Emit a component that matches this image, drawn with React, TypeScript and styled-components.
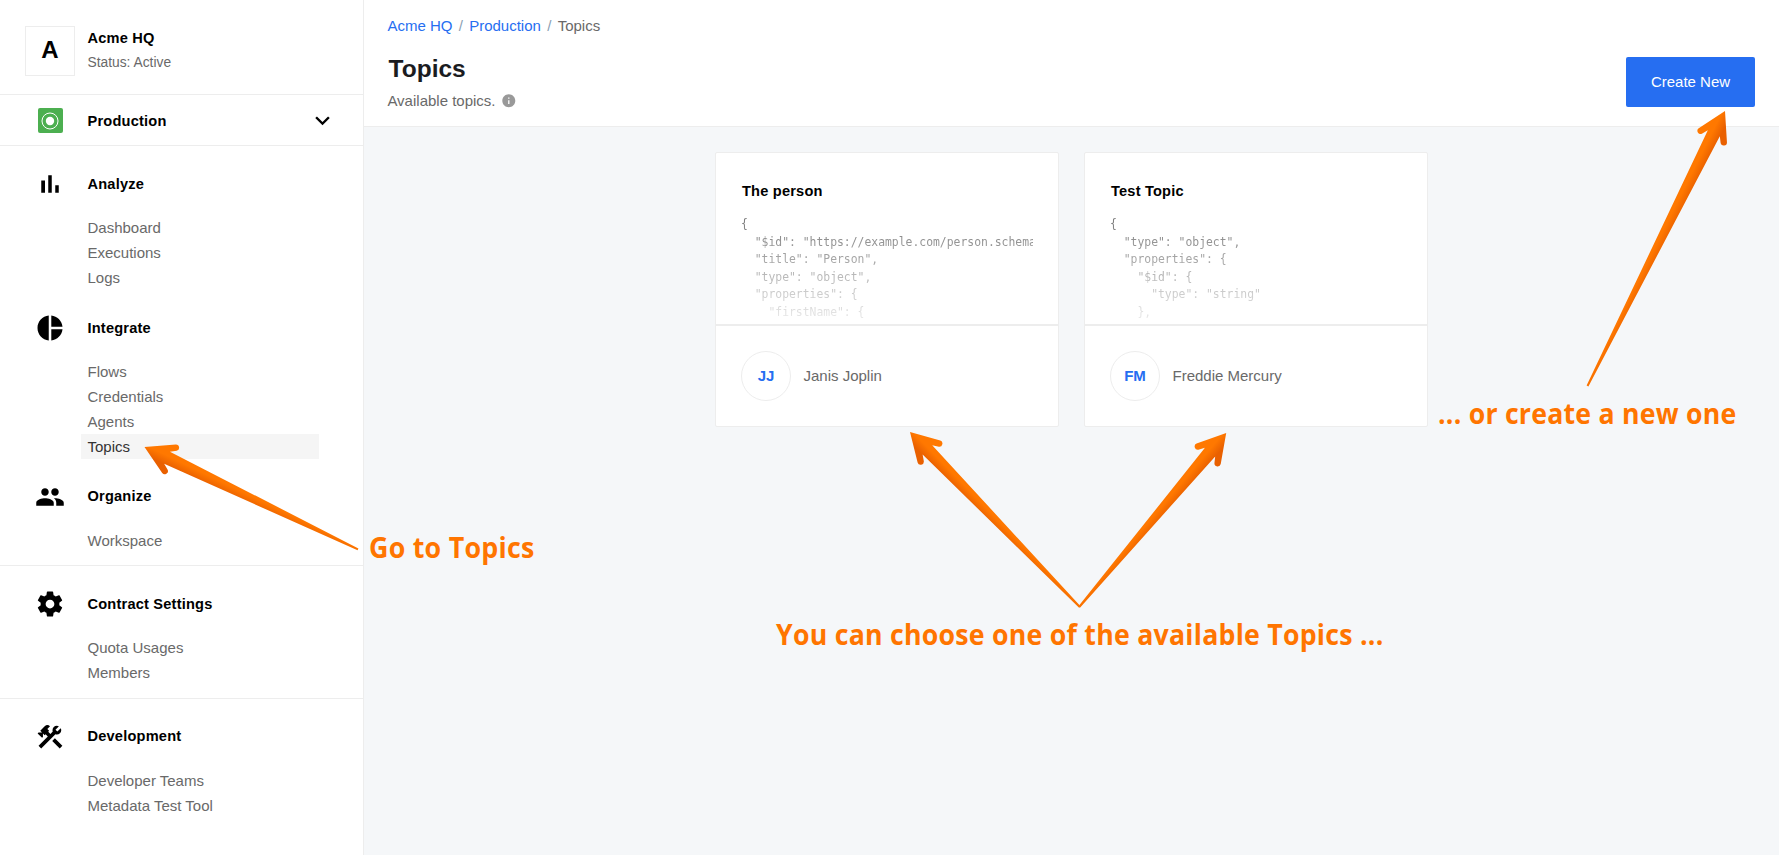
import React from "react";
import styled, { createGlobalStyle } from "styled-components";
import { MdExpandMore, MdInfo } from "react-icons/md";

const line = "#ededed";
const blue = "#266ef1";
const grey = "#696969";

const GlobalStyle = createGlobalStyle`
  * { box-sizing: border-box; }
  body {
    margin: 0;
    font-family: "Liberation Sans", Arial, sans-serif;
    font-size: 15px;
    color: ${grey};
    background: #f5f7f9;
    overflow: hidden;
  }
`;

const Page = styled.div`
  position: relative;
  display: flex;
  width: 100%;
  height: 100vh;
  overflow: hidden;
`;

const Sidebar = styled.aside`
  flex: 0 0 364px;
  background: #fff;
  border-right: 1px solid ${line};
`;

const Account = styled.div`
  display: flex;
  align-items: center;
  gap: 12.5px;
  height: 95px;
  padding: 8px 25px 0;
  border-bottom: 1px solid ${line};
`;

const AccountLogo = styled.div`
  display: flex;
  align-items: center;
  justify-content: center;
  width: 50px;
  height: 50px;
  border: 1px solid ${line};
  color: #000;
  font-size: 24px;
  font-weight: 700;
  padding-bottom: 2px;
`;

const AccountText = styled.div`
  padding-bottom: 2px;
`;

const AccountName = styled.div`
  color: #000;
  font-size: 14.6px;
  font-weight: 700;
  letter-spacing: 0.2px;
  line-height: 25px;
`;

const AccountStatus = styled.div`
  font-size: 13.8px;
  line-height: 24px;
`;

const WorkspaceSwitch = styled.div`
  display: flex;
  align-items: center;
  height: 51px;
  padding: 0 26px 0 38px;
  border-bottom: 1px solid ${line};
  color: #000;
  font-size: 14.6px;
  font-weight: 700;
  letter-spacing: 0.2px;
`;

const WorkspaceName = styled.span`
  flex: 1;
  margin-left: 24.5px;
  padding-top: 1px;
`;

const NavSection = styled.section<{ $last?: boolean; $bottom?: number }>`
  padding: 23px 0 ${(p) => p.$bottom ?? 12}px;
  border-bottom: ${(p) => (p.$last ? "none" : `1px solid ${line}`)};
`;

const NavGroup = styled.div`
  & + & {
    margin-top: 23px;
  }
`;

const NavTitle = styled.div<{ $lineHeight?: number }>`
  display: flex;
  gap: 22.5px;
  height: 30px;
  margin-bottom: 16px;
  padding-left: 35px;
  color: #000;
  font-size: 14.6px;
  font-weight: 700;
  letter-spacing: 0.2px;
  line-height: ${(p) => p.$lineHeight ?? 30}px;
`;

const NavItem = styled.div<{ $active?: boolean }>`
  height: 25px;
  line-height: 25px;
  margin: 0 44px 0 81px;
  padding-left: 6.5px;
  color: ${(p) => (p.$active ? "#333" : grey)};
  background: ${(p) => (p.$active ? "#f5f5f5" : "transparent")};
`;

const Main = styled.main`
  flex: 1;
  min-width: 0;
`;

const Header = styled.header`
  display: flex;
  justify-content: space-between;
  height: 127px;
  padding: 0 24px 0 23.4px;
  background: #fff;
  border-bottom: 1px solid ${line};
`;

const Breadcrumb = styled.nav`
  display: flex;
  gap: 6.3px;
  height: 26px;
  margin-top: 13px;
  line-height: 26px;
`;

const Crumb = styled.span<{ $link?: boolean }>`
  color: ${(p) => (p.$link ? blue : grey)};
`;

const Slash = styled.span`
  color: #8c9fb4;
`;

const Title = styled.h1`
  margin: 15px 0 0 1.2px;
  color: #1b1c1f;
  font-size: 24.5px;
  font-weight: 700;
  line-height: 30px;
`;

const Subtitle = styled.div`
  display: flex;
  align-items: center;
  gap: 5px;
  height: 26px;
  margin-top: 3px;

  svg {
    margin-top: 1px;
    color: #999;
  }
`;

const CreateButton = styled.button`
  width: 129px;
  height: 50px;
  margin-top: 57px;
  padding: 0 0 2px;
  border: 0;
  border-radius: 2px;
  background: ${blue};
  color: #fff;
  font: 15px "Liberation Sans", Arial, sans-serif;
`;

const Cards = styled.div`
  display: flex;
  justify-content: center;
  gap: 25px;
  padding-top: 25px;
`;

const Card = styled.article`
  width: 344px;
  height: 275px;
  border: 1px solid ${line};
  border-radius: 2px;
  background: #fff;
`;

const CardBody = styled.div`
  height: 173px;
  padding: 26px 25px 0;
  border-bottom: 2px solid ${line};
`;

const CardTitle = styled.h2`
  margin: 0 0 10px 1px;
  color: #000;
  font-size: 14.6px;
  font-weight: 700;
  letter-spacing: 0.2px;
  line-height: 25px;
`;

const Code = styled.pre`
  height: 108px;
  margin: 0;
  padding-top: 2px;
  overflow: hidden;
  color: #666;
  font-family: "DejaVu Sans Mono", monospace;
  font-size: 11.4px;
  line-height: 17.5px;
  mask-image: linear-gradient(to bottom, rgba(0, 0, 0, 0.9), rgba(0, 0, 0, 0.12));
`;

const CardFooter = styled.div`
  display: flex;
  align-items: center;
  gap: 12.5px;
  height: 100px;
  padding: 0 25px;
`;

const Avatar = styled.div`
  display: flex;
  align-items: center;
  justify-content: center;
  width: 50px;
  height: 50px;
  padding-bottom: 2px;
  border: 1px solid ${line};
  border-radius: 50%;
  color: ${blue};
  font-weight: 700;
`;

const OwnerName = styled.span`
  padding-bottom: 2px;
`;

const Overlay = styled.svg`
  position: absolute;
  inset: 0;
  width: 1779px;
  height: 855px;
  pointer-events: none;
`;

const Note = styled.text`
  fill: #ff7500;
  font-family: "Open Sans", sans-serif;
  font-size: 28.5px;
  font-weight: 700;
  letter-spacing: 0.25px;
`;

const icons = {
  bars: "M5 9.2h3V19H5zM10.6 5h2.8v14h-2.8zm5.6 8H19v6h-2.8z",
  pie: "M11 2v20c-5.07-.5-9-4.79-9-10s3.93-9.5 9-10zm2.03 0v8.99H22c-.47-4.74-4.24-8.52-8.97-8.99zm0 11.01V22c4.74-.47 8.5-4.25 8.97-8.99h-8.97z",
  people:
    "M16 11c1.66 0 2.99-1.34 2.99-3S17.66 5 16 5c-1.66 0-3 1.34-3 3s1.34 3 3 3zm-8 0c1.66 0 2.99-1.34 2.99-3S9.66 5 8 5C6.34 5 5 6.34 5 8s1.34 3 3 3zm0 2c-2.33 0-7 1.17-7 3.5V19h14v-2.5c0-2.33-4.67-3.5-7-3.5zm8 0c-.29 0-.62.02-.97.05 1.16.84 1.97 1.97 1.97 3.45V19h6v-2.5c0-2.33-4.67-3.5-7-3.5z",
  gear: "M19.43 12.98c.04-.32.07-.64.07-.98s-.03-.66-.07-.98l2.11-1.65c.19-.15.24-.42.12-.64l-2-3.46c-.12-.22-.39-.3-.61-.22l-2.49 1c-.52-.4-1.08-.73-1.69-.98l-.38-2.65C14.46 2.18 14.25 2 14 2h-4c-.25 0-.46.18-.49.42l-.38 2.65c-.61.25-1.17.59-1.69.98l-2.49-1c-.23-.09-.49 0-.61.22l-2 3.46c-.13.22-.07.49.12.64l2.11 1.65c-.04.32-.07.65-.07.98s.03.66.07.98l-2.11 1.65c-.19.15-.24.42-.12.64l2 3.46c.12.22.39.3.61.22l2.49-1c.52.4 1.08.73 1.69.98l.38 2.65c.03.24.24.42.49.42h4c.25 0 .46-.18.49-.42l.38-2.65c.61-.25 1.17-.59 1.69-.98l2.49 1c.23.09.49 0 .61-.22l2-3.46c.12-.22.07-.49-.12-.64l-2.11-1.65zM12 15.5c-1.93 0-3.5-1.57-3.5-3.5s1.57-3.5 3.5-3.5 3.5 1.57 3.5 3.5-1.57 3.5-3.5 3.5z",
  tools:
    "M13.78 15.17l2.12-2.12 6 6-2.12 2.12zM17.5 10c1.93 0 3.5-1.57 3.5-3.5 0-.58-.16-1.12-.41-1.6l-2.7 2.7-1.49-1.49 2.7-2.7c-.48-.25-1.02-.41-1.6-.41C15.57 3 14 4.57 14 6.5c0 .41.08.8.21 1.16l-1.85 1.85-1.78-1.78.71-.71-1.41-1.41L12 3.49a3 3 0 0 0-4.24 0L4.22 7.03l1.41 1.41H2.81l-.71.71 3.54 3.54.71-.71V9.15l1.41 1.41.71-.71 1.78 1.78-7.41 7.41 2.12 2.12L16.34 9.79c.36.13.75.21 1.16.21z",
};

type Group = {
  title: string;
  icon: keyof typeof icons;
  items: string[];
  lineHeight?: number;
};

const sections: { groups: Group[]; bottom?: number }[] = [
  {
    groups: [
      { title: "Analyze", icon: "bars", items: ["Dashboard", "Executions", "Logs"] },
      { title: "Integrate", icon: "pie", items: ["Flows", "Credentials", "Agents", "Topics"] },
      { title: "Organize", icon: "people", items: ["Workspace"], lineHeight: 28 },
    ],
  },
  {
    groups: [{ title: "Contract Settings", icon: "gear", items: ["Quota Usages", "Members"] }],
    bottom: 13,
  },
  {
    groups: [
      {
        title: "Development",
        icon: "tools",
        items: ["Developer Teams", "Metadata Test Tool"],
        lineHeight: 28,
      },
    ],
  },
];

const topics = [
  {
    title: "The person",
    initials: "JJ",
    owner: "Janis Joplin",
    code: `{
  "$id": "https://example.com/person.schema.json",
  "title": "Person",
  "type": "object",
  "properties": {
    "firstName": {`,
  },
  {
    title: "Test Topic",
    initials: "FM",
    owner: "Freddie Mercury",
    code: `{
  "type": "object",
  "properties": {
    "$id": {
      "type": "string"
    },`,
  },
];

function NavIcon({ name }: { name: keyof typeof icons }) {
  return (
    <svg width="30" height="30" viewBox="0 0 24 24" fill="#000">
      <path d={icons[name]} />
    </svg>
  );
}

type ArrowProps = { tip: [number, number]; tail: [number, number]; flip?: boolean };

/* Tapered arrow drawn along the x axis, then turned to run from tip to tail. */
function Arrow({ tip, tail, flip }: ArrowProps) {
  const dx = tail[0] - tip[0];
  const dy = tail[1] - tip[1];
  const length = Math.hypot(dx, dy);
  const angle = (Math.atan2(dy, dx) * 180) / Math.PI;
  return (
    <path
      transform={`translate(${tip[0]} ${tip[1]}) rotate(${angle}) scale(1 ${flip ? -1 : 1})`}
      fill="url(#arrowFill)"
      d={`M0 0L27.2 15.8A3.2 3.2 0 0 0 30.7 10.5L25 6.7L${length} 1V-1L25 -6.7L30.7 -10.5A3.2 3.2 0 0 0 27.2 -15.8Z`}
    />
  );
}

export default function App() {
  return (
    <>
      <GlobalStyle />
      <Page>
        <Sidebar>
          <Account>
            <AccountLogo>A</AccountLogo>
            <AccountText>
              <AccountName>Acme HQ</AccountName>
              <AccountStatus>Status: Active</AccountStatus>
            </AccountText>
          </Account>
          <WorkspaceSwitch>
            <svg width="25" height="25" viewBox="0 0 25 25">
              <rect width="25" height="25" rx="2" fill="#4caf50" />
              <circle cx="12" cy="13" r="8" fill="none" stroke="#fff" strokeWidth="1" />
              <circle cx="12" cy="13" r="4.2" fill="#fff" />
            </svg>
            <WorkspaceName>Production</WorkspaceName>
            <MdExpandMore size={29} />
          </WorkspaceSwitch>
          {sections.map((section, i) => (
            <NavSection key={i} $bottom={section.bottom} $last={i === sections.length - 1}>
              {section.groups.map(({ title, icon, items, lineHeight }) => (
                <NavGroup key={title}>
                  <NavTitle $lineHeight={lineHeight}>
                    <NavIcon name={icon} />
                    {title}
                  </NavTitle>
                  {items.map((item) => (
                    <NavItem key={item} $active={item === "Topics"}>
                      {item}
                    </NavItem>
                  ))}
                </NavGroup>
              ))}
            </NavSection>
          ))}
        </Sidebar>
        <Main>
          <Header>
            <div>
              <Breadcrumb>
                <Crumb $link>Acme HQ</Crumb>
                <Slash>/</Slash>
                <Crumb $link>Production</Crumb>
                <Slash>/</Slash>
                <Crumb>Topics</Crumb>
              </Breadcrumb>
              <Title>Topics</Title>
              <Subtitle>
                Available topics.
                <MdInfo size={15.6} />
              </Subtitle>
            </div>
            <CreateButton>Create New</CreateButton>
          </Header>
          <Cards>
            {topics.map((topic) => (
              <Card key={topic.title}>
                <CardBody>
                  <CardTitle>{topic.title}</CardTitle>
                  <Code>{topic.code}</Code>
                </CardBody>
                <CardFooter>
                  <Avatar>{topic.initials}</Avatar>
                  <OwnerName>{topic.owner}</OwnerName>
                </CardFooter>
              </Card>
            ))}
          </Cards>
        </Main>
        <Overlay viewBox="0 0 1779 855">
          <defs>
            <linearGradient id="arrowFill" gradientUnits="userSpaceOnUse" x1="0" y1="-2" x2="0" y2="7">
              <stop offset="0" stopColor="#ff7800" />
              <stop offset="1" stopColor="#e96000" />
            </linearGradient>
          </defs>
          <Arrow tip={[144.5, 447]} tail={[358, 549.3]} />
          <Arrow tip={[910, 432]} tail={[1079.8, 607]} />
          <Arrow tip={[1226.2, 433]} tail={[1079.2, 607]} flip />
          <Arrow tip={[1725, 111]} tail={[1587.5, 386]} flip />
          <Note x="369" y="557.5" textLength="165.5" lengthAdjust="spacingAndGlyphs">
            Go to Topics
          </Note>
          <Note x="776" y="644.5" textLength="607.5" lengthAdjust="spacingAndGlyphs">
            You can choose one of the available Topics ...
          </Note>
          <Note x="1438" y="424" textLength="298.5" lengthAdjust="spacingAndGlyphs">
            ... or create a new one
          </Note>
        </Overlay>
      </Page>
    </>
  );
}
